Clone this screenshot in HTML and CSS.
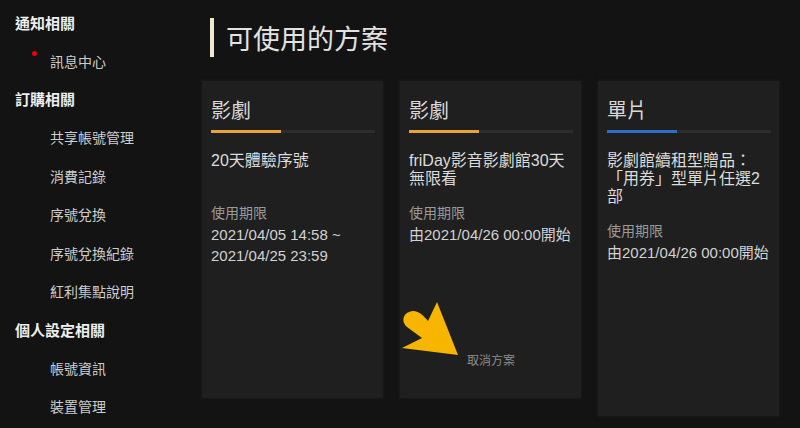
FILE: index.html
```html
<!DOCTYPE html>
<html lang="zh-Hant">
<head>
    <meta charset="UTF-8">
    <meta name="viewport" content="width=device-width, initial-scale=1.0">
    <title>可使用的方案</title>
    <link rel="stylesheet" href="styles.css">
</head>
<body>
    <nav class="sidebar">
        <div class="nav-group">通知相關</div>
        <div class="nav-item has-dot">訊息中心</div>
        <div class="nav-group">訂購相關</div>
        <div class="nav-item">共享帳號管理</div>
        <div class="nav-item">消費記錄</div>
        <div class="nav-item">序號兌換</div>
        <div class="nav-item">序號兌換紀錄</div>
        <div class="nav-item">紅利集點說明</div>
        <div class="nav-group">個人設定相關</div>
        <div class="nav-item">帳號資訊</div>
        <div class="nav-item">裝置管理</div>
    </nav>

    <main class="main">
        <h1 class="page-title">可使用的方案</h1>

        <div class="plans">
            <div class="plan">
                <div class="plan-type">影劇</div>
                <div class="plan-bar"><span class="bar-fill orange"></span></div>
                <div class="plan-name">20天體驗序號</div>
                <div class="plan-period">
                    <div class="period-label">使用期限</div>
                    <div>2021/04/05 14:58 ~</div>
                    <div>2021/04/25 23:59</div>
                </div>
                <div class="plan-footer"></div>
            </div>

            <div class="plan">
                <div class="plan-type">影劇</div>
                <div class="plan-bar"><span class="bar-fill orange"></span></div>
                <div class="plan-name">friDay影音影劇館30天無限看</div>
                <div class="plan-period">
                    <div class="period-label">使用期限</div>
                    <div>由2021/04/26 00:00開始</div>
                </div>
                <div class="plan-footer">
                    <a class="cancel-link">取消方案</a>
                </div>
                <svg class="pointer" width="70" height="65" viewBox="0 0 70 65">
                    <path d="M42 7 L63 60 L7 53 L27 43 L12 32 C6 27 8 19 14 17 C20 14 26 17 33 26 Z" fill="#f7b500"/>
                </svg>
            </div>

            <div class="plan">
                <div class="plan-type">單片</div>
                <div class="plan-bar"><span class="bar-fill blue"></span></div>
                <div class="plan-name">影劇館續租型贈品：「用券」型單片任選2部</div>
                <div class="plan-period">
                    <div class="period-label">使用期限</div>
                    <div>由2021/04/26 00:00開始</div>
                </div>
                <div class="plan-footer"></div>
            </div>
        </div>
    </main>
</body>
</html>
```

FILE: styles.css
```css
body {
    margin: 0;
    background-color: #131313;
    color: #dcdcdc;
    font-family: "Liberation Sans", "Noto Sans CJK TC", sans-serif;
    display: flex;
    min-height: 100vh;
    overflow: hidden;
}
.sidebar {
    width: 202px;
    flex-shrink: 0;
    padding-top: 3px;
}
.nav-group, .nav-item {
    height: 38.4px;
    display: flex;
    align-items: center;
    position: relative;
}
.nav-group {
    padding-left: 15px;
    font-size: 15px;
    font-weight: bold;
    color: #eeeeee;
}
.nav-item {
    padding-left: 50px;
    font-size: 14px;
    color: #cdcdcd;
}
.has-dot::before {
    content: "";
    position: absolute;
    left: 32px;
    top: 10px;
    width: 5px;
    height: 5px;
    border-radius: 50%;
    background-color: #e60012;
}
.main {
    flex: 1;
    padding-right: 21px;
}
.page-title {
    display: flex;
    align-items: center;
    margin: 18px 0 0 8px;
    height: 39px;
    font-size: 27px;
    font-weight: normal;
    color: #e2e2e2;
}
.page-title::before {
    content: "";
    width: 4px;
    height: 39px;
    margin-right: 12px;
    background-color: #efe9d2;
}
.plans {
    display: flex;
    align-items: flex-start;
    gap: 17px;
    margin-top: 24px;
}
.plan {
    position: relative;
    width: 181px;
    box-sizing: border-box;
    padding: 16px 8px 0 9px;
    background-color: #1f1f1f;
    box-shadow: 0 0 3px 1px #1a1a1a;
}
.plan-type {
    font-size: 20px;
    line-height: 28px;
    color: #d8d8d8;
}
.plan-bar {
    height: 3px;
    margin-top: 5px;
    background-color: #2c2c2c;
}
.bar-fill {
    display: block;
    width: 70px;
    height: 3px;
}
.bar-fill.orange {
    background-color: #e9a23b;
}
.bar-fill.blue {
    background-color: #2f6fc7;
}
.plan-name {
    margin-top: 19px;
    min-height: 36px;
    font-size: 16px;
    line-height: 18px;
    color: #dcdcdc;
}
.plan-period {
    margin-top: 15px;
    min-height: 63px;
    font-size: 15px;
    line-height: 21px;
    color: #d2d2d2;
}
.period-label {
    font-size: 14px;
    color: #9a9a9a;
}
.plan-footer {
    height: 132px;
    box-sizing: border-box;
    padding-bottom: 29px;
    display: flex;
    align-items: flex-end;
    justify-content: center;
}
.cancel-link {
    font-size: 12px;
    line-height: 16px;
    color: #8c8c8c;
}
.pointer {
    position: absolute;
    left: -5px;
    top: 214px;
}
```
